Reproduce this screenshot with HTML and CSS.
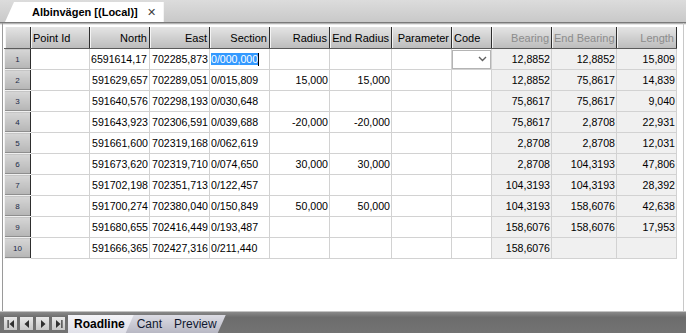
FILE: index.html
```html
<!DOCTYPE html>
<html lang="sv">
<head>
    <meta charset="UTF-8">
    <title>Albinvägen</title>
    <link rel="stylesheet" href="styles.css">
</head>
<body>
    <div class="window">
        <div class="doc-tabs">
            <div class="doc-tab">
                <span class="doc-title">Albinvägen [(Local)]</span>
                <span class="doc-close">&#x2715;</span>
            </div>
        </div>
        <div class="sheet">
            <table class="grid">
                <colgroup>
                    <col style="width:26px"><col style="width:59px"><col style="width:60px"><col style="width:60px">
                    <col style="width:60px"><col style="width:60px"><col style="width:62px"><col style="width:60px">
                    <col style="width:40px"><col style="width:60px"><col style="width:65px"><col style="width:60px">
                </colgroup>
                <thead>
                    <tr>
                        <th class="corner"></th>
                        <th class="left">Point Id</th>
                        <th>North</th>
                        <th>East</th>
                        <th>Section</th>
                        <th>Radius</th>
                        <th>End Radius</th>
                        <th>Parameter</th>
                        <th class="left">Code</th>
                        <th class="ro">Bearing</th>
                        <th class="ro">End Bearing</th>
                        <th class="ro">Length</th>
                    </tr>
                </thead>
                <tbody>
                    <tr>
                        <td class="rh">1</td><td></td>
                        <td class="clip">6591614,17</td><td>702285,873</td>
                        <td class="left"><span class="sel">0/000,000</span><span class="caret"></span></td>
                        <td></td><td></td><td></td>
                        <td class="code"><div class="combo"><svg width="9" height="6" viewBox="0 0 9 6"><path d="M1 1 L4.5 4.5 L8 1" fill="none" stroke="#606060" stroke-width="1.4"/></svg></div></td>
                        <td class="calc">12,8852</td><td class="calc">12,8852</td><td class="calc">15,809</td>
                    </tr>
                    <tr>
                        <td class="rh">2</td><td></td>
                        <td>591629,657</td><td>702289,051</td><td class="left">0/015,809</td>
                        <td>15,000</td><td>15,000</td><td></td><td></td>
                        <td class="calc">12,8852</td><td class="calc">75,8617</td><td class="calc">14,839</td>
                    </tr>
                    <tr>
                        <td class="rh">3</td><td></td>
                        <td>591640,576</td><td>702298,193</td><td class="left">0/030,648</td>
                        <td></td><td></td><td></td><td></td>
                        <td class="calc">75,8617</td><td class="calc">75,8617</td><td class="calc">9,040</td>
                    </tr>
                    <tr>
                        <td class="rh">4</td><td></td>
                        <td>591643,923</td><td>702306,591</td><td class="left">0/039,688</td>
                        <td>-20,000</td><td>-20,000</td><td></td><td></td>
                        <td class="calc">75,8617</td><td class="calc">2,8708</td><td class="calc">22,931</td>
                    </tr>
                    <tr>
                        <td class="rh">5</td><td></td>
                        <td>591661,600</td><td>702319,168</td><td class="left">0/062,619</td>
                        <td></td><td></td><td></td><td></td>
                        <td class="calc">2,8708</td><td class="calc">2,8708</td><td class="calc">12,031</td>
                    </tr>
                    <tr>
                        <td class="rh">6</td><td></td>
                        <td>591673,620</td><td>702319,710</td><td class="left">0/074,650</td>
                        <td>30,000</td><td>30,000</td><td></td><td></td>
                        <td class="calc">2,8708</td><td class="calc">104,3193</td><td class="calc">47,806</td>
                    </tr>
                    <tr>
                        <td class="rh">7</td><td></td>
                        <td>591702,198</td><td>702351,713</td><td class="left">0/122,457</td>
                        <td></td><td></td><td></td><td></td>
                        <td class="calc">104,3193</td><td class="calc">104,3193</td><td class="calc">28,392</td>
                    </tr>
                    <tr>
                        <td class="rh">8</td><td></td>
                        <td>591700,274</td><td>702380,040</td><td class="left">0/150,849</td>
                        <td>50,000</td><td>50,000</td><td></td><td></td>
                        <td class="calc">104,3193</td><td class="calc">158,6076</td><td class="calc">42,638</td>
                    </tr>
                    <tr>
                        <td class="rh">9</td><td></td>
                        <td>591680,655</td><td>702416,449</td><td class="left">0/193,487</td>
                        <td></td><td></td><td></td><td></td>
                        <td class="calc">158,6076</td><td class="calc">158,6076</td><td class="calc">17,953</td>
                    </tr>
                    <tr>
                        <td class="rh">10</td><td></td>
                        <td>591666,365</td><td>702427,316</td><td class="left">0/211,440</td>
                        <td></td><td></td><td></td><td></td>
                        <td class="calc">158,6076</td><td class="calc"></td><td class="calc"></td>
                    </tr>
                </tbody>
            </table>
        </div>
        <div class="sheet-bar">
            <div class="nav">
                <span class="nav-btn"><svg width="8" height="8" viewBox="0 0 8 8"><rect x="0.5" y="0" width="1.2" height="8" fill="#303030"/><path d="M7 0 L2.5 4 L7 8 Z" fill="#303030"/></svg></span>
                <span class="nav-btn"><svg width="8" height="8" viewBox="0 0 8 8"><path d="M6 0 L1.5 4 L6 8 Z" fill="#303030"/></svg></span>
                <span class="nav-btn"><svg width="8" height="8" viewBox="0 0 8 8"><path d="M2 0 L6.5 4 L2 8 Z" fill="#303030"/></svg></span>
                <span class="nav-btn"><svg width="8" height="8" viewBox="0 0 8 8"><path d="M1 0 L5.5 4 L1 8 Z" fill="#303030"/><rect x="6.3" y="0" width="1.2" height="8" fill="#303030"/></svg></span>
            </div>
            <div class="sheet-tabs">
                <span class="sheet-tab active">Roadline</span>
                <span class="sheet-tab">Cant</span>
                <span class="sheet-tab">Preview</span>
            </div>
        </div>
    </div>
</body>
</html>
```

FILE: styles.css
```css
html, body { margin: 0; padding: 0; }
body {
    width: 686px;
    height: 333px;
    overflow: hidden;
    font-family: "Liberation Sans", Arial, sans-serif;
    font-size: 11px;
    background: #ffffff;
}
.window {
    display: flex;
    flex-direction: column;
    height: 333px;
}

/* document tab strip */
.doc-tabs {
    height: 22px;
    background: linear-gradient(#dcdcdc, #c9c9c9);
    border-bottom: 1px solid #7a7a7a;
    box-shadow: 0 1px 0 #b4b4b4, 0 2px 0 #e8e8e8;
    display: flex;
    align-items: flex-end;
    padding-left: 5px;
}
.doc-tab {
    height: 20px;
    background: #ffffff;
    clip-path: polygon(0 100%, 9px 0, 100% 0, 100% 100%);
    display: flex;
    align-items: center;
    padding: 0 8px 0 27px;
    white-space: nowrap;
}
.doc-title {
    font-weight: bold;
    font-size: 11px;
    color: #000;
}
.doc-close {
    margin-left: 9px;
    font-size: 11px;
    color: #404040;
}

/* grid */
.sheet {
    flex: 1;
    padding: 4px 0 0 4px;
    border-left: 1px solid #9a9a9a;
    border-right: 1px solid #c8c8c8;
    margin-left: 2px;
    margin-right: 2px;
}
.grid {
    border-collapse: collapse;
    table-layout: fixed;
    width: 672px;
    margin-left: -3px;
    font-size: 10.6px;
}
.grid th {
    height: 21px;
    padding: 0 2px 0 2px;
    font-weight: normal;
    font-size: 11px;
    text-align: right;
    vertical-align: middle;
    color: #000;
    background: linear-gradient(#e4e4e4, #bcbcbc);
    border-right: 1px solid #2e2e2e;
    border-bottom: 1px solid #5a5a5a;
    box-shadow: inset 1px 0 0 #f4f4f4;
    white-space: nowrap;
    overflow: hidden;
}
.grid th.left { text-align: left; }
.grid th.ro { color: #8c8c8c; }
.grid th.corner { border-right: 1px solid #2e2e2e; }
.grid td {
    height: 20px;
    padding: 0 1px 0 1px;
    text-align: right;
    border: 1px solid #d2d2d2;
    white-space: nowrap;
    overflow: hidden;
    color: #000;
}
.grid td.left { text-align: left; }
.grid td.clip { text-align: left; padding-left: 1px; }
.grid td.calc { background: #f0f0f0; }
.grid td.rh {
    text-align: center;
    font-size: 8px;
    color: #1c2a48;
    background: linear-gradient(#d6d6d6, #b4b4b4);
    border: 1px solid #f0f0f0;
    border-right: 1px solid #2e2e2e;
    box-shadow: inset 0 -1px 0 #8e8e8e;
}
.sel {
    background: #3399ff;
    color: #ffffff;
}
.caret {
    display: inline-block;
    width: 1px;
    height: 13px;
    background: #000;
    vertical-align: -3px;
}
.grid td.code { padding: 0; }
.combo {
    height: 19px;
    border: 1px solid #b4b4b4;
    background: #fff;
    box-sizing: border-box;
    display: flex;
    align-items: center;
    justify-content: flex-end;
    padding-right: 3px;
}

/* sheet bar */
.sheet-bar {
    height: 21px;
    background: linear-gradient(#8a8a8a, #6c6c6c 25%, #737373);
    border-top: 1px solid #c4c4c4;
    display: flex;
    align-items: flex-end;
    padding-left: 4px;
}
.nav {
    display: flex;
    gap: 3px;
    padding-bottom: 3px;
}
.nav-btn {
    width: 13px;
    height: 13px;
    background: linear-gradient(#e8e8e8, #c8c8c8);
    display: flex;
    align-items: center;
    justify-content: center;
}
.sheet-tabs {
    display: flex;
    margin-left: 3px;
}
.sheet-tab {
    height: 18px;
    line-height: 19px;
    font-size: 12px;
    color: #101830;
    background: linear-gradient(#dcdce4, #b8b8c4);
    padding: 0 9px 0 12px;
    margin-left: -9px;
    clip-path: polygon(0 100%, 8px 0, 100% 0, calc(100% - 8px) 100%);
}
.sheet-tab.active {
    background: linear-gradient(#f4f4f8, #e0e0e8);
    font-weight: bold;
    color: #000;
    margin-left: 0;
    padding-left: 6px;
    clip-path: polygon(0 100%, 0 0, 100% 0, calc(100% - 8px) 100%);
    position: relative;
    z-index: 1;
}
```
